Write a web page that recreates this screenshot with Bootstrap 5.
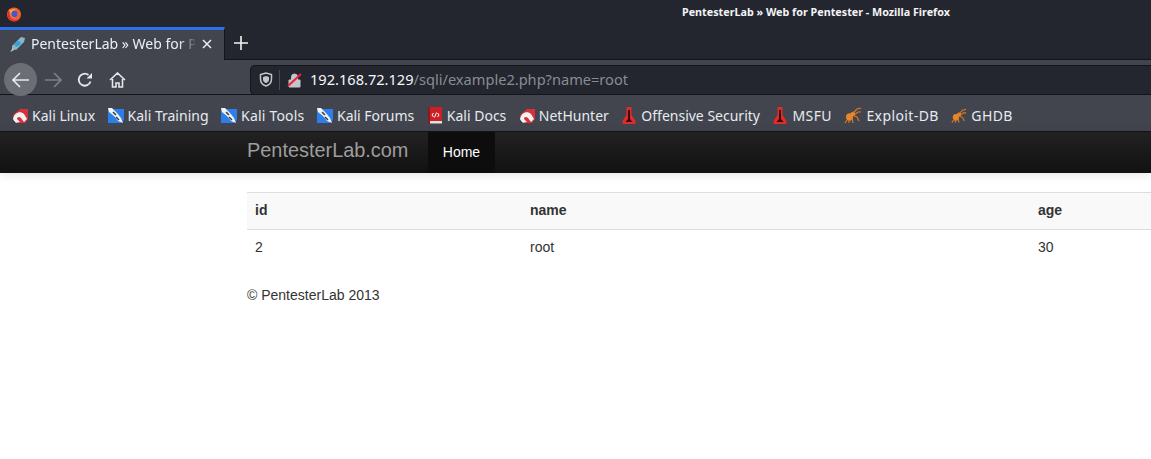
<!DOCTYPE html>
<html lang="en">
<head>
<meta charset="utf-8">
<title>PentesterLab » Web for Pentester - Mozilla Firefox</title>
<link href="https://cdn.jsdelivr.net/npm/bootstrap@5.3.0/dist/css/bootstrap.min.css" rel="stylesheet">
<style>
html,body{height:459px;overflow:hidden;background:#fff}
body{font-family:"Liberation Sans",Arial,sans-serif;font-size:14px;color:#333;width:1151px}
.ui-font{font-family:"Noto Sans",sans-serif}
.title-bar{height:27px;background:#23252f;color:#f4f4f6;padding-left:6px}
.title-text{flex:1;text-align:center;font-weight:700;font-size:10.75px;padding-left:459px;padding-top:1px;margin-bottom:3px}
.tab-strip{height:33px;background:#23252f;border-bottom:1px solid #14151a}
.active-tab{width:225px;height:33px;background:#42454e;border-top:3px solid #2f6fe8;color:#e8f0f8;padding:0 12px 3px 9px;font-size:14px;white-space:nowrap;border-right:1px solid #14151a}
.tab-label{margin-left:5px;width:164px;-webkit-mask-image:linear-gradient(90deg,#000 148px,transparent 166px);mask-image:linear-gradient(90deg,#000 148px,transparent 166px)}
.new-tab{width:32px}
.tool-row{height:35px;background:#42454e;padding:5px 0 0 4px;border-bottom:1px solid #14151a}
.back-btn{width:33px;height:33px;border-radius:50%;background:#6c6e76;flex:none}
.tool-btn{width:32px;height:32px;flex:none}
.url-box{height:30px;flex:1;margin-left:117px;background:#23252f;border:1px solid #14151a;border-right:0;border-radius:5px 0 0 5px;font-size:14.6px;color:#f6f7f8;padding-left:8px;white-space:nowrap}
.url-sep{width:1px;height:20px;background:#4a4c55;margin:0 7px 0 6px}
.url-dim{color:#8a8c92}
.mark-row{height:37px;background:#42454e;padding:5px 0 0 12px;border-bottom:1px solid #14151a;font-size:14px;color:#e6ebf0;gap:12.5px;white-space:nowrap}
.mark-item{gap:4px}
.mark-wide{letter-spacing:.2px}
.mark-wider{letter-spacing:.4px}
.site-nav{height:41px;background:linear-gradient(#222,#111);box-shadow:0 1px 10px rgba(0,0,0,.12);padding-left:247px}
.site-brand{font-size:19.9px;color:#9d9d9d;width:181px;padding-bottom:4px}
.site-home{height:41px;width:67px;background:#0d0d0d;color:#fff;font-size:14px;padding-bottom:1px}
.page-wrap{margin-left:247px;width:940px;padding-top:19px}
.data-table{width:940px;margin:0;table-layout:fixed;border-top:1px solid #ddd;--bs-table-color:#333}
.data-table th,.data-table td{padding:7px 8px 9px;font-size:14px;line-height:20px;border-bottom:0;color:#333}
.data-table thead th{background:#f9f9f9;border-bottom:1px solid #ddd}
.data-table .c1{width:275px}.data-table .c2{width:508px}
.foot-note{margin-top:19px;line-height:20px;color:#333}
</style>
</head>
<body>
<div class="title-bar ui-font d-flex align-items-center">
  <svg width="16" height="16" viewBox="0 0 16 16"><circle cx="8" cy="8.5" r="7" fill="#f2622e"/><path d="M3 3c1 .3 1.500 1 2 1.500C7 3 9 3 10 3.500 8.500 3.500 8 4.500 8 5c2-.5 4 1 3.800 3.500-.2 2-2 3-3.800 3-2.500 0-3.500-2-3.300-3.500" fill="#f9b233"/><circle cx="8.500" cy="8" r="3.200" fill="#4a56c8"/><path d="M1.500 6C1 10 3 15 8 15.500c4 0 6.500-3 7-6-1 3-3.500 4.800-6.500 4.500C5 13.700 2.500 10 3.500 5z" fill="#e8262f"/></svg>
  <div class="title-text">PentesterLab » Web for Pentester - Mozilla Firefox</div>
</div>
<div class="tab-strip ui-font d-flex">
  <div class="active-tab d-flex align-items-center">
    <svg width="17" height="18" viewBox="0 0 17 18"><path d="M3 11 12 2l4 1-1 4-8 8-4-1z" fill="#8fb4c8"/><path d="M5 9l4-3 3 1-1 3-4 2z" fill="#2ea6d8"/><path d="M4 13l-3 4 4-2z" fill="#cfd6dc"/></svg>
    <span class="tab-label">PentesterLab » Web for P</span>
    <svg class="ms-auto" width="10" height="10" viewBox="0 0 10 10"><path d="M1 1l8 8M9 1 1 9" stroke="#e8edf2" stroke-width="1.500" fill="none"/></svg>
  </div>
  <div class="new-tab d-flex align-items-center justify-content-center">
    <svg width="14" height="14" viewBox="0 0 14 14"><path d="M7 0v14M0 7h14" stroke="#f4f4f6" stroke-width="1.600" fill="none"/></svg>
  </div>
</div>
<div class="tool-row ui-font d-flex align-items-center">
  <div class="back-btn d-flex align-items-center justify-content-center">
    <svg width="18" height="16" viewBox="0 0 18 16"><path d="M8 1 1 8l7 7M1 8h16" stroke="#e6e7e9" stroke-width="1.700" fill="none"/></svg>
  </div>
  <div class="tool-btn d-flex align-items-center justify-content-center">
    <svg width="18" height="16" viewBox="0 0 18 16"><path d="M10 1l7 7-7 7M17 8H1" stroke="#7d7f86" stroke-width="1.700" fill="none"/></svg>
  </div>
  <div class="tool-btn d-flex align-items-center justify-content-center">
    <svg width="16" height="16" viewBox="0 0 16 16"><path d="M13.500 9.500A6 6 0 1 1 11.500 3" stroke="#e6e7e9" stroke-width="1.800" fill="none"/><path d="M9.500 6.500h5.500V1z" fill="#e6e7e9"/></svg>
  </div>
  <div class="tool-btn d-flex align-items-center justify-content-center">
    <svg width="17" height="16" viewBox="0 0 17 16"><path d="M1 8 8.500 1 16 8M3.500 7v8h3.500v-4h3v4h3.500V7" stroke="#e6e7e9" stroke-width="1.600" fill="none"/></svg>
  </div>
  <div class="url-box d-flex align-items-center">
    <svg width="14" height="15" viewBox="0 0 14 15"><path d="M7 1 1.500 2.500V7c0 3.500 2.500 6 5.500 7 3-1 5.500-3.500 5.500-7V2.500z" fill="none" stroke="#c4c5c9" stroke-width="1.500"/><path d="M7 4 4 5v2.500c0 1.800 1.300 3 3 3.800 1.700-.8 3-2 3-3.800V5z" fill="#c4c5c9"/></svg>
    <span class="url-sep"></span>
    <svg width="15" height="16" viewBox="0 0 15 16" class="me-2"><path d="M2 8h11v7H2zM4.500 8V5a3 3 0 0 1 6 0v3" fill="#c4c5c9" stroke="#c4c5c9"/><path d="M1 14 14 2" stroke="#e8203c" stroke-width="2"/></svg>
    <span>192.168.72.129<span class="url-dim">/sqli/example2.php?name=root</span></span>
  </div>
</div>
<div class="mark-row ui-font d-flex align-items-center">
  <span class="mark-item d-inline-flex align-items-center"><svg width="16" height="16" viewBox="0 0 16 16"><path d="M1 7 8 1h8v10l-3 4H4z" fill="#d8303a"/><path d="M1 11C2 5 8 2 12 6l3 5-3 3-3-4C7 8 5 9 5 11l3 3-5 1z" fill="#f2f2f2"/><path d="M1 12l3 3H2z" fill="#30343c"/></svg>Kali Linux</span>
  <span class="mark-item d-inline-flex align-items-center"><svg width="16" height="16" viewBox="0 0 16 16"><path d="M0 1h16v11l-3 3H0z" fill="#2c7ee8"/><path d="M0 0h4l5 5 4 5 2 5-5-2-4-5L1 4z" fill="#f2f4f6"/><path d="M5 4l3 3M8 9l3 3" stroke="#39414e" stroke-width="1.600"/></svg>Kali Training</span>
  <span class="mark-item mark-wide d-inline-flex align-items-center"><svg width="16" height="16" viewBox="0 0 16 16"><path d="M0 1h16v11l-3 3H0z" fill="#2c7ee8"/><path d="M0 0h4l5 5 4 5 2 5-5-2-4-5L1 4z" fill="#f2f4f6"/><path d="M5 4l3 3M8 9l3 3" stroke="#39414e" stroke-width="1.600"/></svg>Kali Tools</span>
  <span class="mark-item d-inline-flex align-items-center"><svg width="16" height="16" viewBox="0 0 16 16"><path d="M0 1h16v11l-3 3H0z" fill="#2c7ee8"/><path d="M0 0h4l5 5 4 5 2 5-5-2-4-5L1 4z" fill="#f2f4f6"/><path d="M5 4l3 3M8 9l3 3" stroke="#39414e" stroke-width="1.600"/></svg>Kali Forums</span>
  <span class="mark-item d-inline-flex align-items-center"><svg width="16" height="17" viewBox="0 0 16 17"><rect x="2" y="0" width="13" height="15" fill="#cf1f26"/><rect x="2" y="14" width="13" height="2.500" fill="#e0e0e0"/><rect x="1" y="0" width="2" height="17" fill="#8d1a20"/><path d="M6.500 6 5 8l1.500 2M10.500 6 12 8l-1.500 2M9.500 5.500l-2 5" stroke="#fff" fill="none"/></svg>Kali Docs</span>
  <span class="mark-item d-inline-flex align-items-center"><svg width="16" height="16" viewBox="0 0 16 16"><path d="M1 7 8 1h8v10l-3 4H4z" fill="#d8303a"/><path d="M1 11C2 5 8 2 12 6l3 5-3 3-3-4C7 8 5 9 5 11l3 3-5 1z" fill="#f2f2f2"/><path d="M1 12l3 3H2z" fill="#30343c"/></svg>NetHunter</span>
  <span class="mark-item d-inline-flex align-items-center"><svg width="16" height="17" viewBox="0 0 15 17"><path d="M5 0h5v8l4 6v3H1v-3l4-6z" fill="#e22a2a"/><path d="M6.500 3h2v9l2.500 3H4l2.500-3z" fill="#3a0d0d"/></svg>Offensive Security</span>
  <span class="mark-item mark-wider d-inline-flex align-items-center"><svg width="16" height="17" viewBox="0 0 15 17"><path d="M5 0h5v8l4 6v3H1v-3l4-6z" fill="#e22a2a"/><path d="M6.500 3h2v9l2.500 3H4l2.500-3z" fill="#3a0d0d"/></svg>MSFU</span>
  <span class="mark-item mark-wider d-inline-flex align-items-center"><svg width="18" height="17" viewBox="0 0 18 17"><ellipse cx="5.500" cy="10" rx="3.500" ry="3.800" fill="#e8862a"/><circle cx="9" cy="7" r="2.300" fill="#e8862a"/><path d="M9 6 13 2l4-1M10 8l4-3h3M10 9l3 1 2 4M8 11l1 5M3 13 1 16M5 13v3" stroke="#d97a22" stroke-width="1.200" fill="none"/></svg>Exploit-DB</span>
  <span class="mark-item mark-wider d-inline-flex align-items-center"><svg width="16" height="16" viewBox="0 0 18 17"><ellipse cx="5.500" cy="10" rx="3.500" ry="3.800" fill="#e8862a"/><circle cx="9" cy="7" r="2.300" fill="#e8862a"/><path d="M9 6 13 2l4-1M10 8l4-3h3M10 9l3 1 2 4M8 11l1 5M3 13 1 16M5 13v3" stroke="#d97a22" stroke-width="1.200" fill="none"/></svg>GHDB</span>
</div>
<nav class="site-nav d-flex align-items-center">
  <span class="site-brand">PentesterLab.com</span>
  <span class="site-home d-flex align-items-center justify-content-center">Home</span>
</nav>
<main class="page-wrap">
  <table class="table data-table">
    <thead><tr><th class="c1">id</th><th class="c2">name</th><th>age</th></tr></thead>
    <tbody><tr><td>2</td><td>root</td><td>30</td></tr></tbody>
  </table>
  <div class="foot-note">© PentesterLab 2013</div>
</main>
<script src="https://cdn.jsdelivr.net/npm/bootstrap@5.3.0/dist/js/bootstrap.bundle.min.js"></script>
</body>
</html>
